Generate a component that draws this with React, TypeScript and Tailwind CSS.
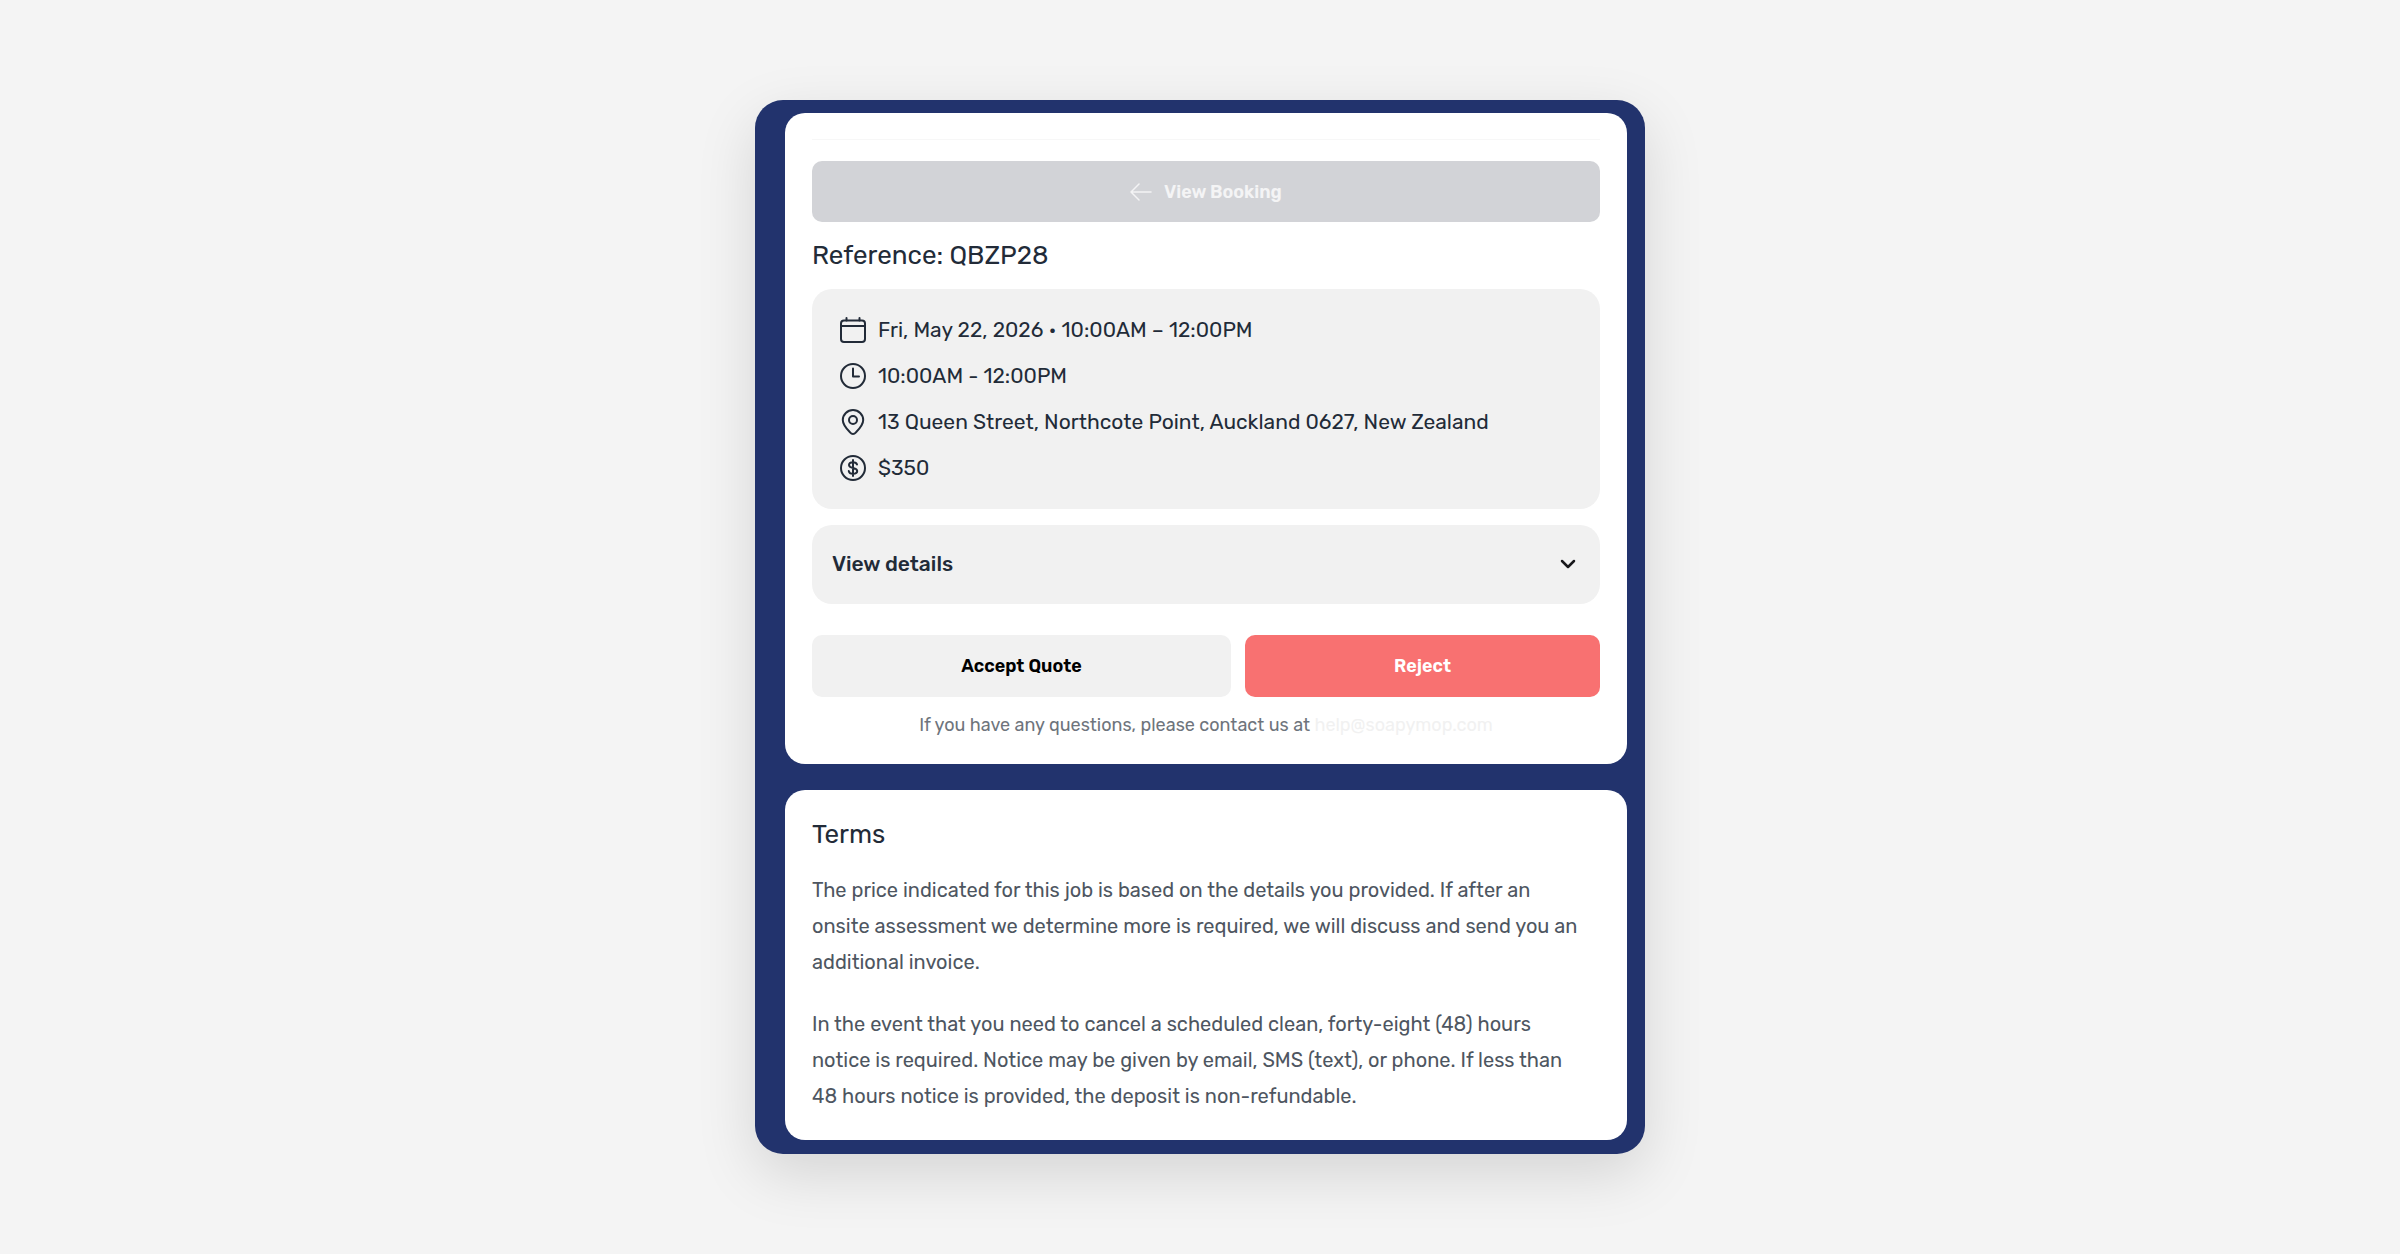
import type { ReactNode } from "react";

const Icon = ({ children }: { children: ReactNode }) => (
	<svg
		viewBox="0 0 26 26"
		className="h-[26px] w-[26px] shrink-0"
		fill="none"
		stroke="currentColor"
		strokeWidth="2"
		strokeLinecap="round"
		strokeLinejoin="round"
		aria-hidden="true"
	>
		{children}
	</svg>
);

const details = [
	{
		text: "Fri, May 22, 2026 • 10:00AM – 12:00PM",
		icon: (
			<Icon>
				<rect x="1" y="3.5" width="24" height="21.5" rx="3" />
				<path d="M1 9h24M6.5 1v2.5M19.5 1v2.5" />
			</Icon>
		),
	},
	{
		text: "10:00AM - 12:00PM",
		icon: (
			<Icon>
				<circle cx="13" cy="13" r="12" />
				<path d="M13 5.500v8h6" />
			</Icon>
		),
	},
	{
		text: "13 Queen Street, Northcote Point, Auckland 0627, New Zealand",
		icon: (
			<Icon>
				<path d="M13 25c-1 0-2-.6-3-1.700C6 19.300 2.800 15.500 2.800 11a10.200 10 0 0 1 20.400 0c0 4.500-3.200 8.300-7.200 12.300-1 1.100-2 1.700-3 1.700z" />
				<circle cx="13" cy="11" r="4" />
			</Icon>
		),
	},
	{
		text: "$350",
		icon: (
			<Icon>
				<circle cx="13" cy="13" r="12" />
				<path d="M17 9.600C16.600 8 15.200 7.200 13 7.200c-2.400 0-4 1-4 2.800 0 4.200 8.200 1.800 8.200 6 0 1.800-1.700 2.800-4.200 2.800-2.300 0-3.900-.9-4.200-2.700M13 5v16" />
			</Icon>
		),
	},
];

const terms = [
	"The price indicated for this job is based on the details you provided. If after an onsite assessment we determine more is required, we will discuss and send you an additional invoice.",
	"In the event that you need to cancel a scheduled clean, forty-eight (48) hours notice is required. Notice may be given by email, SMS (text), or phone. If less than 48 hours notice is provided, the deposit is non-refundable.",
];

const QuoteCard = () => (
	<section className="rounded-[20px] bg-white px-[27px] py-[26px]">
		<hr className="border-t border-[#f7f7f7]" />
		<button
			type="button"
			className="mt-[21px] flex h-[61px] w-full items-center justify-center gap-3 rounded-[10px] bg-[#d2d3d7] pt-px text-[18px] font-semibold text-[#f4f4f5]"
		>
			<svg
				viewBox="0 0 22 18"
				className="h-[18px] w-[22px]"
				fill="none"
				stroke="currentColor"
				strokeWidth="1.5"
				strokeLinecap="round"
				strokeLinejoin="round"
				aria-hidden="true"
			>
				<path d="M9 1 1 9l8 8M1 9h20" />
			</svg>
			View Booking
		</button>

		<h1 className="mt-[18px] text-[26px] leading-8 text-[#222b38]">
			Reference: QBZP28
		</h1>

		<ul className="mt-[17px] flex flex-col gap-5 rounded-[20px] bg-[#f1f1f1] p-7 text-[21px] leading-[26px] text-[#222b38]">
			{details.map((item) => (
				<li key={item.text} className="flex items-center gap-3">
					{item.icon}
					<span>{item.text}</span>
				</li>
			))}
		</ul>

		<button
			type="button"
			aria-expanded="false"
			className="mt-4 flex h-[79px] w-full items-center justify-between rounded-[20px] bg-[#f1f1f1] pr-6 pb-0.5 pl-5 text-[21px] font-medium text-[#222b38]"
		>
			View details
			<svg
				viewBox="0 0 16 10"
				className="h-[10px] w-4"
				fill="none"
				stroke="#18181b"
				strokeWidth="2.5"
				strokeLinecap="round"
				strokeLinejoin="round"
				aria-hidden="true"
			>
				<path d="m2 2 6 6 6-6" />
			</svg>
		</button>

		<div className="mt-[31px] grid grid-cols-[419fr_355fr] gap-[14px] text-[18px] font-semibold">
			<button
				type="button"
				className="h-[62px] rounded-[10px] bg-[#f1f1f1] pt-px text-black"
			>
				Accept Quote
			</button>
			<button
				type="button"
				className="h-[62px] rounded-[10px] bg-[#f87171] pt-px text-white"
			>
				Reject
			</button>
		</div>

		<p className="mt-[15px] text-center text-[18px] leading-[26px] text-[#6e747c]">
			If you have any questions, please contact us at{" "}
			<a href="mailto:help@soapymop.com" className="text-[#f1f1f1]">
				help@soapymop.com
			</a>
		</p>
	</section>
);

const TermsCard = () => (
	<section className="rounded-[20px] bg-white px-[27px] pt-[29px] pb-[26px]">
		<h2 className="text-[26px] leading-8 text-[#222b38]">Terms</h2>
		<div className="mt-[21px] flex flex-col gap-[26px] pr-2 text-[20px] leading-9 text-[#4e5661]">
			{terms.map((term) => (
				<p key={term}>{term}</p>
			))}
		</div>
	</section>
);

export default function App() {
	return (
		<main className="flex min-h-screen items-center justify-center bg-[#f4f4f4] font-['Rubik','Roboto',sans-serif]">
			<div className="flex w-full max-w-[890px] flex-col gap-[26px] rounded-[28px] bg-[#22336d] pt-[13px] pr-[18px] pb-[14px] pl-[30px] shadow-[0_20px_60px_rgba(0,0,0,0.13)]">
				<QuoteCard />
				<TermsCard />
			</div>
		</main>
	);
}
